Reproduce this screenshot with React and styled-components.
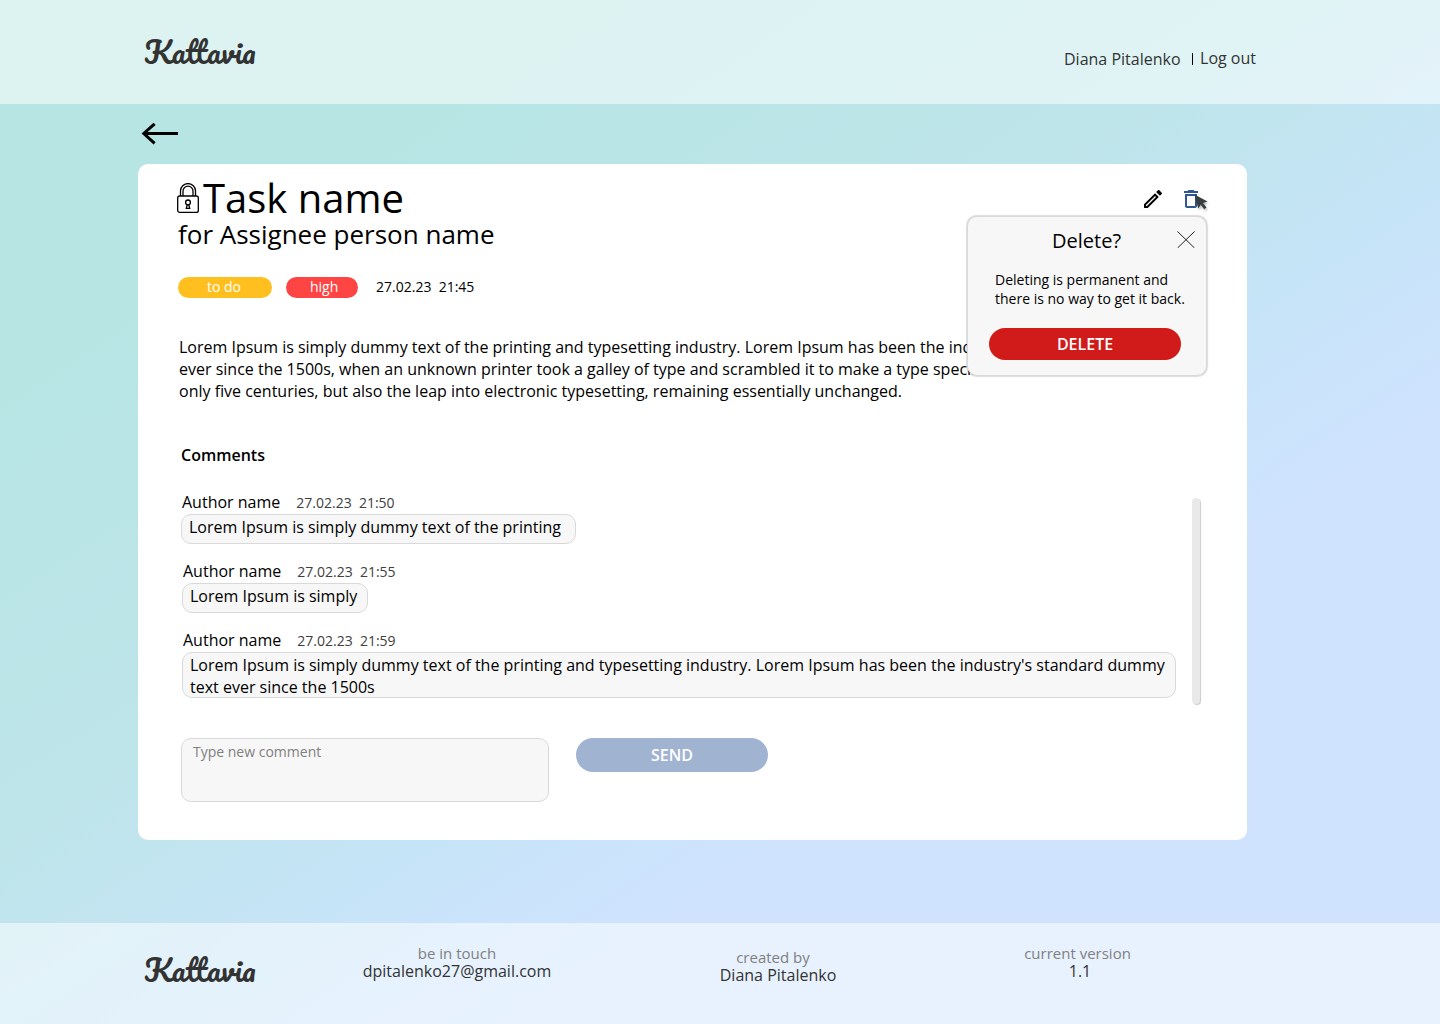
import React from "react";
import styled, { createGlobalStyle } from "styled-components";

const GlobalStyle = createGlobalStyle`
  * { box-sizing: border-box; }
  body { margin: 0; }
  button, textarea { font-family: inherit; }
`;

const Page = styled.div`
  width: 1440px;
  height: 1024px;
  display: flex;
  flex-direction: column;
  overflow: hidden;
  font-family: "Open Sans", "Noto Sans", sans-serif;
  font-size: 16px;
  line-height: 22px;
  color: #000;
  background: linear-gradient(147deg, #b7e5e4 20%, #bee5ea 43%, #c5e4f6 56%, #cfe3ff 69%);
`;

const Header = styled.header`
  height: 104px;
  flex: none;
  display: flex;
  align-items: flex-start;
  justify-content: space-between;
  padding: 34px 184px 0 144px;
  background: rgba(255, 255, 255, 0.52);
`;

const Logo = styled.div`
  width: 111px;
  height: 34px;
  font-family: Pacifico, "Liberation Serif", serif;
  font-weight: 400;
  font-size: 30px;
  line-height: 36px;
  color: #333;
  white-space: nowrap;
`;

const Account = styled.div`
  display: flex;
  align-items: flex-start;
  padding-top: 13px;
  color: #333;
`;

const UserName = styled.span`
  padding-top: 1px;
`;

const Divider = styled.span`
  width: 1px;
  height: 12px;
  margin: 6px 7px 0 11.5px;
  background: #000;
`;

const Main = styled.main`
  flex: 1;
  padding: 19px 193px 0 138px;
`;

const BackArrow = styled.svg`
  display: block;
  margin: 0 0 19px 3px;
`;

const Card = styled.section`
  position: relative;
  height: 676px;
  padding: 11px 40px 0 39px;
  border-radius: 10px;
  background: #fff;
`;

const TitleRow = styled.div`
  display: flex;
  justify-content: space-between;
  align-items: flex-start;
`;

const Title = styled.h1`
  display: flex;
  align-items: flex-start;
  gap: 4px;
  margin: 0;
  font-size: 40px;
  line-height: 45px;
  font-weight: 400;
`;

const LockIcon = styled.svg`
  display: block;
  margin-top: 8px;
`;

const Actions = styled.div`
  display: flex;
  gap: 14px;
  padding: 12px 4px 0 0;
`;

const Assignee = styled.p`
  margin: 0 0 29px 1px;
  font-size: 26px;
  line-height: 28px;
`;

const Meta = styled.div`
  display: flex;
  align-items: flex-start;
  gap: 14px;
  height: 21px;
  margin: 0 0 38px 1px;
  font-size: 14px;
`;

const Badge = styled.span`
  width: ${(p) => p.$width}px;
  height: 21px;
  padding-left: ${(p) => p.$inset}px;
  border-radius: 11px;
  line-height: 20px;
  color: #fff;
  background: ${(p) => p.$color};
`;

const DateText = styled.time`
  font-size: 14px;
  line-height: 20px;
  white-space: pre;
  color: ${(p) => p.$color || "#000"};
  margin-left: ${(p) => p.$gap || 0}px;
`;

const Description = styled.p`
  margin: 0 0 42px 2px;
  white-space: nowrap;
`;

const SectionTitle = styled.h2`
  margin: 0 0 25px 4px;
  font-size: 16px;
  line-height: 22px;
  font-weight: 600;
`;

const CommentsArea = styled.div`
  display: flex;
  justify-content: space-between;
  height: 247px;
  padding: 0 7px 0 4px;
`;

const CommentList = styled.div`
  display: flex;
  flex-direction: column;
  gap: 16px;
`;

const Comment = styled.article`
  margin-left: ${(p) => p.$indent || 0}px;
`;

const CommentHead = styled.div`
  display: flex;
  align-items: baseline;
  height: 23px;
  padding-left: 1px;
  line-height: 22px;
`;

const Bubble = styled.div`
  width: ${(p) => p.$width}px;
  height: ${(p) => p.$height || 30}px;
  padding: 1px 0 0 7px;
  border: 1px solid #d9d9d9;
  border-radius: 10px;
  background: #f7f7f7;
  white-space: nowrap;
`;

const Scrollbar = styled.div`
  width: 8px;
  height: 206px;
  margin-top: 7px;
  border-radius: 5px;
  background: #e9e9e9;
  box-shadow: 1px 1px 1px rgba(0, 0, 0, 0.2);
`;

const Composer = styled.form`
  display: flex;
  align-items: flex-start;
  gap: 27px;
  padding-left: 4px;
`;

const CommentInput = styled.textarea`
  display: block;
  width: 368px;
  height: 64px;
  padding: 3px 11px;
  border: 1px solid #d9d9d9;
  border-radius: 10px;
  background: #f7f7f7;
  font-size: 14px;
  line-height: 20px;
  resize: none;
  &::placeholder {
    color: #808080;
    opacity: 1;
  }
`;

const Button = styled.button`
  display: block;
  width: 192px;
  height: ${(p) => p.$height}px;
  padding: 0;
  border: 0;
  border-radius: 17px;
  font-size: 16px;
  line-height: 22px;
  font-weight: 600;
  color: #fff;
  background: ${(p) => p.$color};
`;

const Popover = styled.div`
  position: absolute;
  top: 52px;
  right: 40px;
  width: 240px;
  height: 160px;
  padding: 11px 1px 0 21px;
  border: 1px solid #d9d9d9;
  box-shadow: 0 0 1px 0.5px rgba(0, 0, 0, 0.14);
  border-radius: 10px;
  background: #f7f7f7;
`;

const PopoverHead = styled.div`
  display: flex;
  justify-content: space-between;
  padding: 0 9px 0 63px;
  height: 42px;
  font-size: 20px;
  line-height: 26px;
`;

const PopoverText = styled.p`
  margin: 0 0 20px 6px;
  font-size: 14px;
  line-height: 19px;
  white-space: nowrap;
`;

const Cursor = styled.svg`
  position: absolute;
  left: 1054px;
  top: 28px;
  filter: drop-shadow(1px 2px 1px rgba(0, 0, 0, 0.25));
`;

const Footer = styled.footer`
  height: 101px;
  flex: none;
  display: flex;
  align-items: flex-start;
  padding: 19px 0 0 144px;
  background: rgba(255, 255, 255, 0.52);
`;

const FooterLogo = styled.div`
  padding-top: 10px;
`;

const FooterColumn = styled.div`
  width: ${(p) => p.$width}px;
  margin-left: ${(p) => p.$gap}px;
  padding-top: ${(p) => p.$drop || 0}px;
  line-height: 18px;
  text-align: center;
  white-space: nowrap;
  color: #333;
`;

const FooterLabel = styled.div`
  padding-right: ${(p) => p.$shift || 0}px;
  font-size: 15px;
  color: #808080;
`;

const comments = [
  { time: "27.02.23  21:50", width: 395, lines: ["Lorem Ipsum is simply dummy text of the printing"] },
  { time: "27.02.23  21:55", width: 186, indent: 1, lines: ["Lorem Ipsum is simply"] },
  {
    time: "27.02.23  21:59",
    width: 994,
    height: 46,
    indent: 1,
    lines: [
      "Lorem Ipsum is simply dummy text of the printing and typesetting industry. Lorem Ipsum has been the industry's standard dummy",
      "text ever since the 1500s",
    ],
  },
];

export default function App() {
  return (
    <>
      <GlobalStyle />
      <Page>
        <Header>
          <Logo>Kattavia</Logo>
          <Account>
            <UserName>Diana Pitalenko</UserName>
            <Divider />
            <span>Log out</span>
          </Account>
        </Header>

        <Main>
          <BackArrow width="38" height="22" viewBox="0 0 38 22" fill="none" stroke="#000" strokeWidth="3">
            <path d="M37 10.5H3M13.6 .8L2.8 10.5L13.6 20.4" />
          </BackArrow>

          <Card>
            <TitleRow>
              <Title>
                <LockIcon width="22" height="31" viewBox="0 0 22 31" fill="none" stroke="#000" strokeWidth="1.3">
                  <rect x=".7" y="13" width="20.6" height="16.4" rx="2" />
                  <path d="M3.5 13V7.8a7.5 7.2 0 0 1 15 0V13M6 13V8.2a5 5 0 0 1 10 0V13" />
                  <circle cx="11" cy="19.4" r="2.4" />
                  <path d="M10.3 21.5L9.3 25.3H12.7L11.7 21.5" />
                </LockIcon>
                Task name
              </Title>
              <Actions>
                <svg width="24" height="24" viewBox="0 0 24 24" fill="#000">
                  <path d="M14.06 9.02l.92.92L5.92 19H5v-.92l9.06-9.06M17.66 3c-.25 0-.51.1-.7.29l-1.83 1.83 3.75 3.75 1.83-1.83a.996.996 0 0 0 0-1.41l-2.34-2.34c-.2-.2-.45-.29-.71-.29zm-3.6 3.19L3 17.25V21h3.75L17.81 9.94l-3.75-3.75z" />
                </svg>
                <svg width="24" height="24" viewBox="0 0 24 24" fill="#305694">
                  <path d="M6 19c0 1.1.9 2 2 2h8c1.1 0 2-.9 2-2V7H6v12zM8 9h8v10H8V9zm7.5-5l-1-1h-5l-1 1H5v2h14V4h-3.5z" />
                </svg>
              </Actions>
            </TitleRow>
            <Assignee>for Assignee person name</Assignee>
            <Meta>
              <Badge $width={94} $inset={29} $color="#ffc01f">to do</Badge>
              <Badge $width={72} $inset={24} $color="#ff4444">high</Badge>
              <DateText $gap={4}>{"27.02.23  21:45"}</DateText>
            </Meta>
            <Description>
              Lorem Ipsum is simply dummy text of the printing and typesetting industry. Lorem Ipsum has been the
              industry's standard dummy text
              <br />
              ever since the 1500s, when an unknown printer took a galley of type and scrambled it to make a type
              specimen book.
              <br />
              only five centuries, but also the leap into electronic typesetting, remaining essentially unchanged.
            </Description>

            <SectionTitle>Comments</SectionTitle>
            <CommentsArea>
              <CommentList>
                {comments.map((c) => (
                  <Comment key={c.time} $indent={c.indent}>
                    <CommentHead>
                      Author name
                      <DateText $gap={16} $color="#404040">{c.time}</DateText>
                    </CommentHead>
                    <Bubble $width={c.width} $height={c.height}>
                      {c.lines.map((line) => (
                        <div key={line}>{line}</div>
                      ))}
                    </Bubble>
                  </Comment>
                ))}
              </CommentList>
              <Scrollbar />
            </CommentsArea>

            <Composer>
              <CommentInput placeholder="Type new comment" />
              <Button type="button" $height={34} $color="#a0b4d2">SEND</Button>
            </Composer>

            <Popover>
              <PopoverHead>
                Delete?
                <svg width="20" height="20" viewBox="0 0 20 20" fill="none" stroke="#222" strokeWidth="1">
                  <path d="M1.5 3.5L18.5 20M18.5 3.5L1.5 20" />
                </svg>
              </PopoverHead>
              <PopoverText>
                Deleting is permanent and
                <br />
                there is no way to get it back.
              </PopoverText>
              <Button type="button" $height={32} $color="#d11a1a">DELETE</Button>
            </Popover>
            <Cursor width="20" height="22" viewBox="0 0 20 22">
              <path d="M2.5 2.5L15.5 9.5L11 11L14.5 15.5L12.2 17.2L8.8 12.8L6.2 16.5Z" fill="#383d3f" />
            </Cursor>
          </Card>
        </Main>

        <Footer>
          <FooterLogo>
            <Logo>Kattavia</Logo>
          </FooterLogo>
          <FooterColumn $width={190} $gap={107} $drop={2}>
            <FooterLabel>be in touch</FooterLabel>
            dpitalenko27@gmail.com
          </FooterColumn>
          <FooterColumn $width={118} $gap={167} $drop={6}>
            <FooterLabel $shift={10}>created by</FooterLabel>
            Diana Pitalenko
          </FooterColumn>
          <FooterColumn $width={112} $gap={187} $drop={2}>
            <FooterLabel $shift={5}>current version</FooterLabel>
            1.1
          </FooterColumn>
        </Footer>
      </Page>
    </>
  );
}
